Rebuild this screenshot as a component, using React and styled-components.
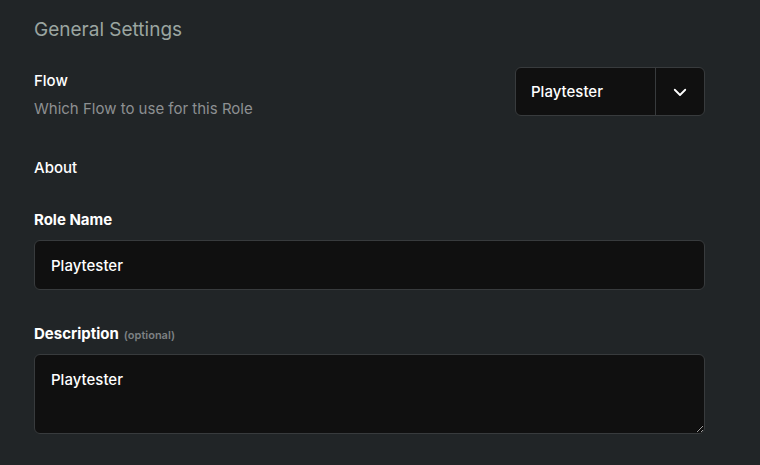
import styled, { createGlobalStyle } from 'styled-components';

const GlobalStyle = createGlobalStyle`
  html, body {
    margin: 0;
    padding: 0;
    background: #212527;
    font-family: Inter, "Noto Sans", sans-serif;
  }
`

function Chevron() {
  return (
    <svg width="18" height="18" viewBox="0 0 24 24" fill="none" stroke="#ffffff" strokeWidth="2.4" strokeLinecap="round" strokeLinejoin="round">
      <path d="M5 9l7 7 7-7" />
    </svg>
  )
}

function App() {
  return (
    <Page>
      <GlobalStyle />
      <Heading>General Settings</Heading>
      <FlowRow>
        <div>
          <Label>Flow</Label>
          <Hint>Which Flow to use for this Role</Hint>
        </div>
        <Select>
          <SelectValue>Playtester</SelectValue>
          <SelectToggle><Chevron /></SelectToggle>
        </Select>
      </FlowRow>
      <Section>About</Section>
      <Field>
        <FieldLabel>Role Name</FieldLabel>
        <Input defaultValue="Playtester" />
      </Field>
      <Field>
        <FieldLabel>Description <Optional>(optional)</Optional></FieldLabel>
        <TextArea defaultValue="Playtester" />
      </Field>
    </Page>
  )
}

const Page = styled.div`
  padding: 16px 55px 0 34px;
  color: #fff;
`
const Heading = styled.h2`
  margin: 0;
  font-size: 19px;
  font-weight: 400;
  color: #9ba5a1;
  line-height: 28px;
`
const FlowRow = styled.div`
  display: flex;
  justify-content: space-between;
  align-items: flex-start;
  margin-top: 23px;
`
const Label = styled.div`
  font-size: 15px;
  font-weight: 500;
  line-height: 22px;
  margin-top: 3px;
`
const Hint = styled.div`
  font-size: 15px;
  color: #8d9092;
  line-height: 22px;
  margin-top: 6px;
`
const Select = styled.div`
  display: flex;
  width: 190px;
  height: 49px;
  box-sizing: border-box;
  background: #101010;
  border: 1px solid #383b3d;
  border-radius: 6px;
`
const SelectValue = styled.div`
  flex: 1;
  display: flex;
  align-items: center;
  padding-left: 15px;
  font-size: 15px;
  font-weight: 500;
`
const SelectToggle = styled.div`
  width: 48px;
  display: flex;
  align-items: center;
  justify-content: center;
  border-left: 1px solid #383b3d;
`
const Section = styled.div`
  margin-top: 37px;
  font-size: 15px;
  font-weight: 500;
  line-height: 22px;
`
const Field = styled.div`
  margin-top: 30px;
  & + & {
    margin-top: 33px;
  }
`
const FieldLabel = styled.div`
  display: flex;
  align-items: baseline;
  gap: 5px;
  height: 22px;
  font-size: 15px;
  font-weight: 700;
  line-height: 22px;
  margin-bottom: 9px;
`
const Optional = styled.span`
  font-size: 11px;
  font-weight: 600;
  color: #7d8183;
`
const inputStyles = `
  display: block;
  width: 100%;
  box-sizing: border-box;
  background: #101010;
  border: 1px solid #383b3d;
  border-radius: 6px;
  color: #fff;
  font-family: Inter, "Noto Sans", sans-serif;
  font-size: 15px;
  font-weight: 500;
  padding: 0 16px;
  outline: none;
`
const Input = styled.input`
  ${inputStyles}
  height: 50px;
`
const TextArea = styled.textarea`
  ${inputStyles}
  height: 80px;
  padding-top: 14px;
  line-height: 22px;
  resize: vertical;
`

export default App;
